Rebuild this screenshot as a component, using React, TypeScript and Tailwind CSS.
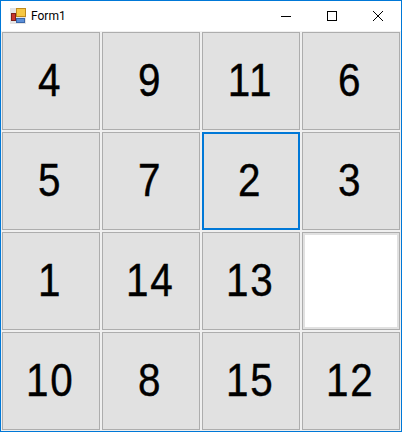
const tiles = [4, 9, 11, 6, 5, 7, 2, 3, 1, 14, 13, 0, 10, 8, 15, 12];

function Tile({ n }: { n: number }) {
  // 空きマス
  if (n === 0) {
    return (
      <div className="h-[98px] border border-[#adadad] bg-[#e1e1e1] p-[2px]">
        <div className="h-full bg-white" />
      </div>
    );
  }
  const focused = n === 2;
  return (
    <div
      className={`h-[98px] flex items-center justify-center bg-[#e1e1e1] text-[47px] text-black ${
        focused ? "border-2 border-[#0078d7]" : "border border-[#adadad]"
      }`}
    >
      <span className="inline-block scale-x-[0.86] -translate-x-[1px] -translate-y-[1px] tracking-[2px] [-webkit-text-stroke:0.4px_black]">{n}</span>
    </div>
  );
}

export default function App() {
  return (
    <div className="w-[402px] h-[432px] bg-[#f0f0f0] border border-[#0078d7] font-['Liberation_Sans',sans-serif] overflow-hidden">
      {/* タイトルバー */}
      <div className="h-[30px] bg-white flex items-center">
        <svg width="16" height="16" viewBox="0 0 16 16" className="ml-[9px]">
          <rect x="0" y="0" width="16" height="16" fill="#e4e4e4" />
          <rect x="6.5" y="0.5" width="9" height="8" fill="#f6c743" stroke="#c08a1c" />
          <rect x="1.5" y="5.5" width="4" height="7" fill="#c8352b" stroke="#7d1f1a" />
          <rect x="6.5" y="10.5" width="8" height="4" fill="#5b8fd8" stroke="#3a66a8" />
        </svg>
        <span className="ml-[5px] text-[12px] text-black font-['Roboto',sans-serif]">Form1</span>
        <div className="ml-auto flex">
          <button className="w-[46px] h-[30px] flex items-center justify-center">
            <svg width="10" height="10" viewBox="0 0 10 10">
              <path d="M0 5.5H10" stroke="#000" fill="none" />
            </svg>
          </button>
          <button className="w-[46px] h-[30px] flex items-center justify-center">
            <svg width="10" height="10" viewBox="0 0 10 10">
              <rect x="0.5" y="0.5" width="9" height="9" stroke="#000" fill="none" />
            </svg>
          </button>
          <button className="w-[46px] h-[30px] flex items-center justify-center">
            <svg width="10" height="10" viewBox="0 0 10 10">
              <path d="M0 0L10 10M10 0L0 10" stroke="#000" fill="none" />
            </svg>
          </button>
        </div>
      </div>
      {/* 盤面 */}
      <div className="grid grid-cols-[repeat(4,98px)] gap-[2px] pl-[1px] pt-[1px]">
        {tiles.map(n => (
          <Tile key={n} n={n} />
        ))}
      </div>
    </div>
  );
}
